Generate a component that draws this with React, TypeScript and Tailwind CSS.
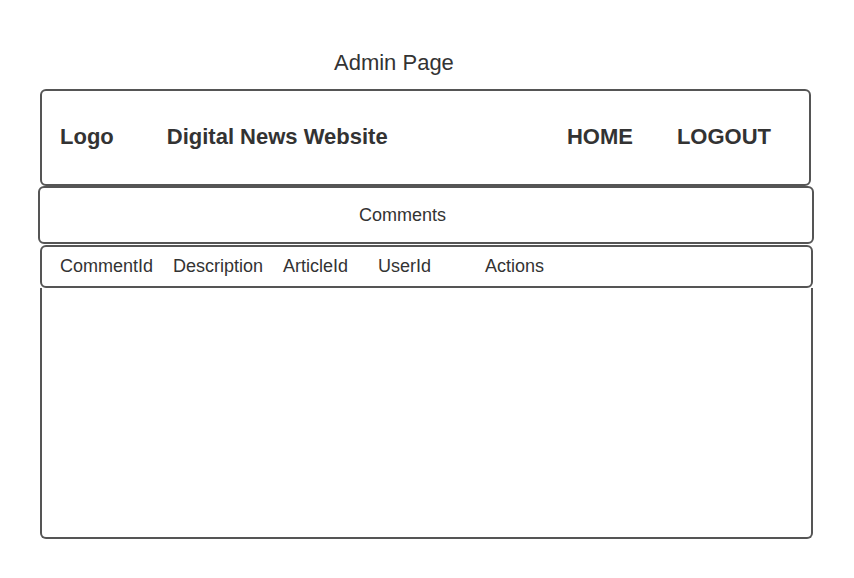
import React from 'react';

const columns = [
  { label: 'CommentId', width: 'w-[113px]' },
  { label: 'Description', width: 'w-[110px]' },
  { label: 'ArticleId', width: 'w-[95px]' },
  { label: 'UserId', width: 'w-[107px]' },
  { label: 'Actions', width: 'w-[80px]' },
];

export default function App() {
  return (
    <div className="w-[854px] h-[578px] bg-white pt-[50px] text-[#333] font-['Liberation_Sans',Arial,sans-serif]">
      {/* Page title */}
      <div className="ml-[334px] h-[26px] leading-[26px] text-[22px]">Admin Page</div>

      {/* Header */}
      <div className="mt-[13px] ml-[40px] w-[771px] h-[97px] border-2 border-[#555] rounded-md flex items-center pb-[2px] pl-[18px] pr-[38px] text-[22px] font-bold">
        <span>Logo</span>
        <span className="ml-[53px]">Digital News Website</span>
        <span className="ml-auto">HOME</span>
        <span className="ml-[44px]">LOGOUT</span>
      </div>

      {/* Section title */}
      <div className="ml-[38px] w-[776px] h-[58px] border-2 border-[#555] rounded-md flex items-center pl-[319px] text-[18px]">
        Comments
      </div>

      {/* Table */}
      <div className="ml-[40px] w-[773px]">
        <div className="mt-px h-[43px] border-2 border-[#555] rounded-md flex items-center pl-[18px] text-[18px]">
          {columns.map((c) => (
            <span key={c.label} className={c.width}>
              {c.label}
            </span>
          ))}
        </div>
        <div className="h-[251px] border-2 border-t-0 border-[#555] rounded-b-md"></div>
      </div>
    </div>
  );
}
